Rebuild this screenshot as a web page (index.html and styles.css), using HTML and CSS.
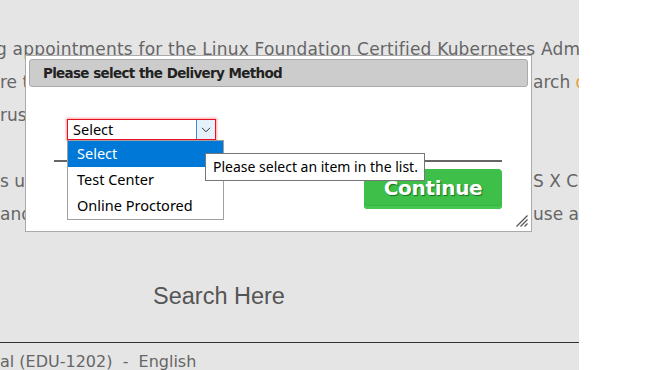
FILE: index.html
```html
<!DOCTYPE html>
<html>
<head>
<meta charset="utf-8">
<link rel="stylesheet" href="styles.css">
</head>
<body>
<div class="page">
  <div class="bg-text">
    <div class="line full">g appointments for the Linux Foundation Certified Kubernetes Administrator exam</div>
    <div class="line split"><span>re the exam</span><span>arch <span class="orange">o</span></span></div>
    <div class="line split"><span>rus</span><span></span></div>
    <div class="line split"><span>&nbsp;</span><span></span></div>
    <div class="line split"><span>s u</span><span>S X Client</span></div>
    <div class="line split"><span>and</span><span>use a</span></div>
  </div>
  <div class="search">Search Here</div>
  <div class="footer">al (EDU-1202) &nbsp;-&nbsp; English</div>

  <div class="dialog">
    <div class="titlebar">Please select the Delivery Method</div>
    <div class="body">
      <div class="select-wrap">
        <div class="select">
          <span class="select-value">Select</span>
          <span class="select-arrow">
            <svg width="10" height="6" viewBox="0 0 10 6"><polyline points="1,0.8 5,4.8 9,0.8" fill="none" stroke="#333" stroke-width="1"/></svg>
          </span>
        </div>
        <ul class="options">
          <li class="selected">Select</li>
          <li>Test Center</li>
          <li>Online Proctored</li>
        </ul>
        <div class="tooltip">Please select an item in the list.</div>
      </div>
      <hr class="rule">
      <div class="actions">
        <button class="continue">Continue</button>
      </div>
    </div>
    <svg class="grip" width="13" height="13" viewBox="0 0 13 13">
      <line x1="12.5" y1="1.5" x2="1.5" y2="12.5" stroke="#555" stroke-width="1.2"/>
      <line x1="12.5" y1="5.5" x2="5.5" y2="12.5" stroke="#555" stroke-width="1.2"/>
      <line x1="12.5" y1="9.5" x2="9.5" y2="12.5" stroke="#555" stroke-width="1.2"/>
    </svg>
  </div>
</div>
</body>
</html>
```
FILE: styles.css
```css
html, body {
  margin: 0;
  padding: 0;
  background: #fff;
}

.page {
  position: relative;
  width: 579px;
  height: 370px;
  background: #e5e5e5;
  overflow: hidden;
  font-family: "DejaVu Sans", Verdana, sans-serif;
  color: #666;
}

.bg-text {
  padding-top: 33px;
}

.line {
  height: 33px;
  line-height: 33px;
  font-size: 17px;
  white-space: nowrap;
}

.line.full {
  margin-left: -4px;
  letter-spacing: 0.2px;
}

.line.split {
  display: grid;
  grid-template-columns: 533px auto;
}

.orange {
  color: #e8a040;
}

.search {
  margin-top: 51px;
  margin-left: 153px;
  font-family: "Liberation Sans", Arial, sans-serif;
  font-size: 23.5px;
  line-height: 28px;
  color: #555;
}

.footer {
  margin-top: 32px;
  border-top: 1px solid #333;
  padding-top: 8px;
  font-size: 16px;
  line-height: 22px;
  color: #666;
  white-space: nowrap;
}

.dialog {
  position: absolute;
  left: 25px;
  top: 55px;
  width: 507px;
  height: 177px;
  box-sizing: border-box;
  border: 1px solid #aaa;
  background: #fff;
  padding: 3px;
}

.titlebar {
  height: 28px;
  box-sizing: border-box;
  border: 1px solid #aaa;
  border-radius: 3px;
  background: #ccc;
  padding-left: 13px;
  line-height: 26px;
  font-weight: bold;
  font-size: 13.5px;
  letter-spacing: -0.7px;
  word-spacing: 0.5px;
  color: #222;
}

.body {
  padding: 32px 26px 0 25px;
}

.select-wrap {
  position: relative;
  margin-left: 13px;
  width: 149px;
}

.select {
  display: flex;
  height: 21px;
  box-sizing: border-box;
  border: 1px solid #e81123;
  box-shadow: 0 0 2px 1px rgba(255, 90, 90, 0.55);
  background: #fff;
  font-family: "Noto Sans", "Open Sans", sans-serif;
  font-size: 14.5px;
  color: #000;
}

.select-value {
  flex: 1;
  padding-left: 5px;
  line-height: 19px;
}

.select-arrow {
  width: 19px;
  box-sizing: border-box;
  border-left: 1px solid #3c8ad6;
  background: #e5f1fb;
  display: flex;
  align-items: center;
  justify-content: center;
}

.options {
  position: absolute;
  left: 0;
  top: 21px;
  width: 157px;
  margin: 0;
  padding: 0;
  list-style: none;
  box-sizing: border-box;
  border: 1px solid #a0a0a0;
  background: #fff;
  font-family: "Noto Sans", "Open Sans", sans-serif;
  font-size: 14.5px;
  color: #000;
  z-index: 2;
}

.options li {
  height: 26px;
  line-height: 25px;
  padding-left: 9px;
}

.options li.selected {
  background: #0078d7;
  color: #fff;
}

.tooltip {
  position: absolute;
  left: 138px;
  top: 34px;
  width: 220px;
  height: 28px;
  box-sizing: border-box;
  border: 1px solid #767676;
  background: #fff;
  padding-left: 7px;
  line-height: 26px;
  font-family: "Noto Sans", "Open Sans", sans-serif;
  font-size: 14px;
  color: #000;
  white-space: nowrap;
  z-index: 3;
}

.rule {
  margin: 20px 0 0 0;
  height: 2px;
  border: 0;
  background: #666;
}

.actions {
  display: flex;
  justify-content: flex-end;
  margin-top: 7px;
}

.continue {
  width: 138px;
  height: 40px;
  border: 0;
  border-radius: 4px;
  background: #3dbf49;
  box-shadow: inset 0 -3px 0 #46c652, inset 0 -4px 0 #37b443;
  font-family: "DejaVu Sans", Verdana, sans-serif;
  font-weight: bold;
  font-size: 20px;
  letter-spacing: -0.3px;
  color: #fff;
  text-shadow: 1px 1px 1px rgba(0, 60, 0, 0.6);
  padding: 0 0 2px 0;
}

.grip {
  position: absolute;
  right: 3px;
  bottom: 4px;
}
```
